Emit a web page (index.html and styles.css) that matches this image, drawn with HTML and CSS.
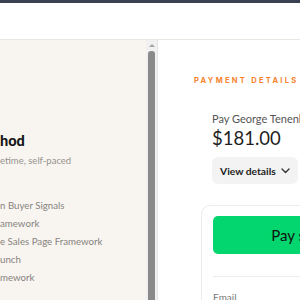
FILE: index.html
```html
<!DOCTYPE html>
<html>
<head>
<meta charset="utf-8">
<link rel="stylesheet" href="styles.css">
</head>
<body>
<div class="topbar"></div>
<header class="header"></header>
<main class="main">
  <section class="left">
    <h1 class="title">hod</h1>
    <p class="sub">etime, self-paced</p>
    <ul class="modules">
      <li>n Buyer Signals</li>
      <li>amework</li>
      <li>e Sales Page Framework</li>
      <li>unch</li>
      <li>mework</li>
    </ul>
  </section>
  <div class="scrollbar">
    <div class="arrow"></div>
    <div class="thumb"></div>
  </div>
  <section class="right">
    <h2 class="eyebrow">PAYMENT DETAILS</h2>
    <div class="summary">
      <p class="payee">Pay George Tenenbaum</p>
      <p class="amount">$181.00</p>
      <button class="details">View details
        <svg width="9" height="6" viewBox="0 0 9 6"><path d="M1 1l3.5 3.5L8 1" fill="none" stroke="#333" stroke-width="1.4" stroke-linecap="round" stroke-linejoin="round"/></svg>
      </button>
    </div>
    <div class="card">
      <button class="pay">Pay securely</button>
      <hr class="divider">
      <label class="label">Email</label>
    </div>
  </section>
</main>
</body>
</html>
```
FILE: styles.css
```css
html, body {
  margin: 0;
  padding: 0;
  background: #fff;
  overflow: hidden;
  width: 300px;
  height: 300px;
}
.topbar {
  height: 3px;
  background: #3b4152;
}
.header {
  height: 36px;
  background: #fff;
  border-bottom: 1px solid #ebe7e2;
}
.main {
  display: flex;
  height: 260px;
}
.left {
  width: 146px;
  flex: none;
  background: #f8f5f1;
  font-family: Lato, "Noto Sans", sans-serif;
  padding-top: 92px;
  box-sizing: border-box;
}
.title {
  margin: 0;
  font-size: 14.5px;
  line-height: 18px;
  font-weight: 900;
  color: #161616;
}
.sub {
  margin: 4px 0 0;
  font-size: 9.5px;
  line-height: 14px;
  color: #96938f;
}
.modules {
  list-style: none;
  margin: 28px 0 0;
  padding: 0;
}
.modules li {
  font-size: 9.7px;
  line-height: 18px;
  color: #87837e;
}
.scrollbar {
  width: 11px;
  flex: none;
  background: #f1f1f1;
  border-right: 1px solid #e6e6e6;
  display: flex;
  flex-direction: column;
  align-items: center;
}
.arrow {
  width: 0;
  height: 0;
  margin-top: 4px;
  border-left: 3px solid transparent;
  border-right: 3px solid transparent;
  border-bottom: 3px solid #a3a3a3;
}
.thumb {
  margin-top: 4px;
  width: 7px;
  flex: 1;
  background: #8a8a8a;
  border-radius: 3px 3px 0 0;
}
.right {
  flex: 1;
  min-width: 0;
  padding: 35px 0 0 36px;
  font-family: Lato, "Noto Sans", sans-serif;
  white-space: nowrap;
}
.eyebrow {
  margin: 0;
  font-family: Inter, sans-serif;
  font-size: 7.5px;
  line-height: 12px;
  font-weight: 700;
  letter-spacing: 2.3px;
  color: #f7832f;
}
.summary {
  margin: 25px 0 0 18px;
}
.payee {
  margin: 0;
  font-size: 11px;
  line-height: 14px;
  color: #555;
}
.amount {
  margin: 0;
  font-size: 18.5px;
  line-height: 24px;
  color: #1f1f1f;
}
.details {
  margin-top: 7px;
  height: 27px;
  padding: 0 8px 0 8px;
  border: none;
  border-radius: 6px;
  background: #f3f3f3;
  font-family: Lato, "Noto Sans", sans-serif;
  font-size: 10.3px;
  font-weight: 700;
  color: #222;
  display: flex;
  align-items: center;
  gap: 5px;
}
.card {
  margin: 21px 0 0 7px;
  width: 240px;
  padding: 10px 11px 11px;
  border: 1px solid #ececec;
  border-radius: 9px;
}
.pay {
  display: block;
  width: 198px;
  height: 38px;
  border: none;
  border-radius: 5px;
  background: #04d66f;
  font-family: Lato, "Noto Sans", sans-serif;
  font-size: 15px;
  color: #111;
}
.divider {
  margin: 22px 0 0;
  border: none;
  border-top: 1px solid #ececec;
}
.label {
  display: block;
  margin-top: 14px;
  font-size: 10px;
  color: #777;
}
```
